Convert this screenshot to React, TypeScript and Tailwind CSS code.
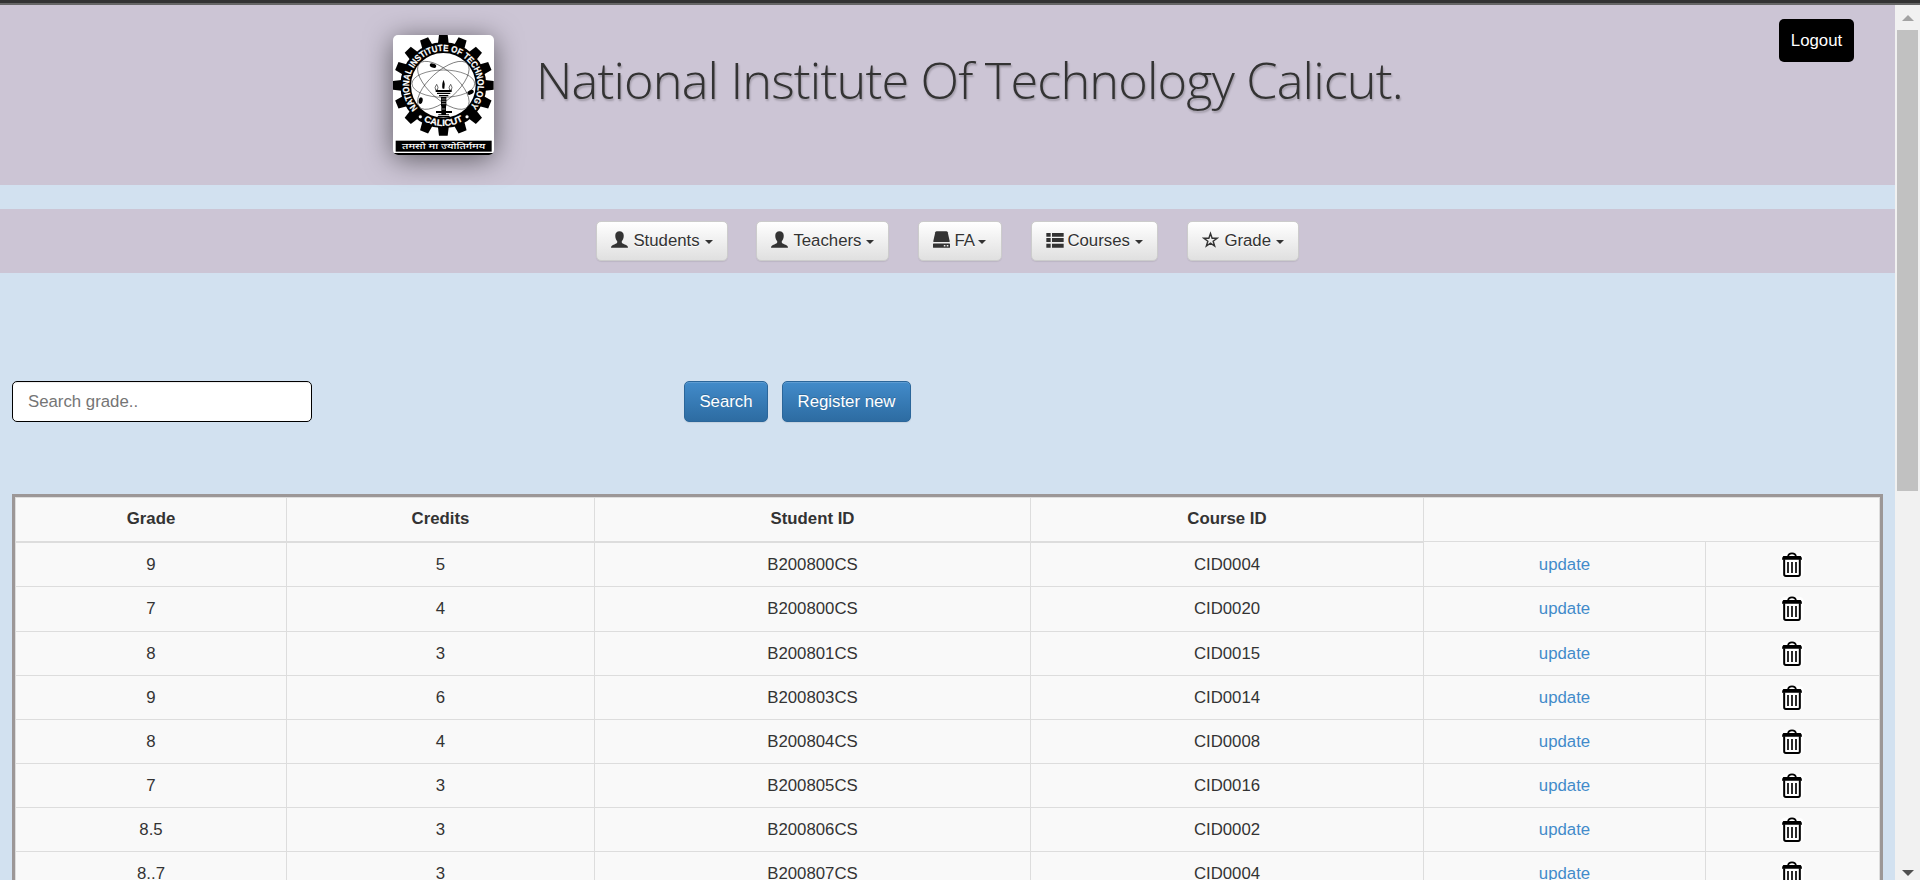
import React from "react";

const rows = [
  { grade: "9", credits: "5", student: "B200800CS", course: "CID0004", h: "h-[44px]" },
  { grade: "7", credits: "4", student: "B200800CS", course: "CID0020", h: "h-[45px]" },
  { grade: "8", credits: "3", student: "B200801CS", course: "CID0015", h: "h-[44px]" },
  { grade: "9", credits: "6", student: "B200803CS", course: "CID0014", h: "h-[44px]" },
  { grade: "8", credits: "4", student: "B200804CS", course: "CID0008", h: "h-[44px]" },
  { grade: "7", credits: "3", student: "B200805CS", course: "CID0016", h: "h-[44px]" },
  { grade: "8.5", credits: "3", student: "B200806CS", course: "CID0002", h: "h-[44px]" },
  { grade: "8..7", credits: "3", student: "B200807CS", course: "CID0004", h: "h-[44px]" },
];

function UserIcon() {
  return (
    <svg className="h-[17px] w-[17px]" viewBox="0 0 52 51" fill="currentColor">
      <path d="M26 0c8 0 13 5 13 14 0 8-3 13-6 17v4c1 3 5 4 9 6 6 2 10 4 10 10H0c0-6 4-8 10-10 4-2 8-3 9-6v-4c-3-4-6-9-6-17C13 5 18 0 26 0z" />
    </svg>
  );
}

function HddIcon() {
  return (
    <svg className="h-[17px] w-[17px]" viewBox="0 0 52 51" fill="currentColor">
      <path d="M11 0h30c2 0 3 1 4 3l6 27c0 2 0 3-2 3H3c-2 0-2-1-2-3L7 3c1-2 2-3 4-3z" />
      <path
        fillRule="evenodd"
        d="M2 38h48q2 0 2 2v9q0 2-2 2H2q-2 0-2-2v-9q0-2 2-2zM33 42v5h5v-5zM42 42v5h5v-5z"
      />
    </svg>
  );
}

function ListIcon() {
  return (
    <svg className="h-[17px] w-[18px]" viewBox="0 0 54 51" fill="currentColor">
      <path d="M1 6h13v11H1zM18 6h35v11H18zM1 21h13v12H1zM18 21h35v12H18zM1 38h13v12H1zM18 38h35v12H18z" />
    </svg>
  );
}

function StarIcon() {
  return (
    <svg className="h-[17px] w-[17px]" viewBox="0 0 48 48" fill="none" stroke="currentColor" strokeWidth="4">
      <path d="M24 7l4.600 13.500h14L31.500 29l4.200 13.500L24 34.500l-11.700 8L16.500 29 5.400 20.500h14z" />
    </svg>
  );
}

function NavButton({
  icon,
  label,
  className,
  labelClass = "mr-[5px] ml-[5px]",
}: {
  icon: React.ReactNode;
  label: string;
  className: string;
  labelClass?: string;
}) {
  return (
    <button
      className={
        "flex h-[40px] items-center rounded-[5px] border border-[#ccc] bg-linear-to-b from-white to-[#e0e0e0] pb-px pl-[14.4px] text-[#333] shadow-[0_1px_1px_rgba(0,0,0,0.08)] [text-shadow:0_1px_0_#fff] " +
        className
      }
    >
      <span className="mb-[3px]">{icon}</span>
      <span className={"leading-6 " + labelClass}>{label}</span>
      <span className="mt-[3px] border-x-[4px] border-t-[4px] border-x-transparent border-t-[#333]" />
    </button>
  );
}

function Crest() {
  const teeth = Array.from({ length: 16 }, (_, i) => i * 22.5);
  return (
    <svg
      className="h-[120px] w-[101px] rounded-[5px] bg-white shadow-[0_4px_28px_rgba(0,0,0,0.55)]"
      viewBox="0 0 303 360"
    >
      <defs>
        <path id="ringTop" d="M151 254a103 103 0 1 1 .1 0" />
        <path id="ringBottom" d="M29 151a122 122 0 0 0 244 0" />
      </defs>
      {teeth.map((a) => (
        <path key={a} d="M134 32L138 0H164L168 32z" transform={`rotate(${a} 151 151)`} />
      ))}
      <circle cx="151" cy="151" r="129" />
      <circle cx="151" cy="151" r="97" fill="#fff" />
      <g fill="none" stroke="#222" strokeWidth="1.600">
        <ellipse cx="151" cy="146" rx="94" ry="41" />
        <ellipse cx="151" cy="151" rx="97" ry="42" transform="rotate(42 151 151)" />
        <ellipse cx="151" cy="151" rx="97" ry="42" transform="rotate(-42 151 151)" />
      </g>
      <ellipse cx="120" cy="92" rx="10" ry="6" transform="rotate(20 120 92)" />
      <ellipse cx="233" cy="172" rx="10" ry="6" transform="rotate(-30 233 172)" />
      <ellipse cx="83" cy="197" rx="10" ry="6" transform="rotate(100 83 197)" />
      <path d="M152 134q6 14 2 27h-5q-4-13 3-27z" />
      <path d="M128 165h48v6h-48zM132 173h40v4h-40zM138 180h28v4h-28zM144 186h16v28h-16zM129 228h48v6h-48zM145 214h14v24h-14zM136 238h32v3h-32zM134 243h36v4h-36z" />
      <path d="M146 192h12M146 199h12M146 206h12M147 222h10" stroke="#fff" strokeWidth="1.500" />
      <path
        d="M131 148q7 9 2 17h-5q-5-8 3-17zM173 148q7 9 2 17h-5q-5-8 3-17z"
        fill="#fff"
        stroke="#222"
        strokeWidth="2"
      />
      <g
        fill="#fff"
        stroke="#fff"
        strokeWidth="0.600"
        fontFamily="'Liberation Sans', sans-serif"
        fontWeight="700"
        fontSize="27"
      >
        <text>
          <textPath href="#ringTop" startOffset="86" textLength="468" lengthAdjust="spacingAndGlyphs">
            NATIONAL INSTITUTE OF TECHNOLOGY
          </textPath>
        </text>
        <text>
          <textPath href="#ringBottom" startOffset="130" textLength="124" lengthAdjust="spacingAndGlyphs">
            CALICUT
          </textPath>
        </text>
        <circle cx="82" cy="245" r="4.500" />
        <circle cx="222" cy="245" r="4.500" />
      </g>
      <rect x="8" y="317" width="288" height="33" />
      <rect x="0" y="354" width="303" height="6" />
      <text
        x="152"
        y="341"
        fill="#fff"
        fontSize="23"
        fontWeight="500"
        textAnchor="middle"
        textLength="250"
        lengthAdjust="spacingAndGlyphs"
        fontFamily="'Noto Sans Devanagari', 'Noto Sans', sans-serif"
      >
        तमसो मा ज्योतिर्गमय
      </text>
    </svg>
  );
}

function TrashIcon() {
  return (
    <svg className="ml-[74px] block h-[26px] w-[24px]" viewBox="0 0 72 78">
      <rect x="1" y="2" width="70" height="74" rx="14" fill="#fff" />
      <path d="M24 14q1-10 12-10t12 10" fill="none" stroke="#000" strokeWidth="5" />
      <path d="M10 12h52q4 3 4 11H6q0-8 4-11z" />
      <path d="M12.500 22v45q0 5 5 5h37q5 0 5-5V22" fill="none" stroke="#000" strokeWidth="6" />
      <path d="M24 30v33M36 30v33M48 30v33" stroke="#000" strokeWidth="5" />
    </svg>
  );
}

const cell = "border-r border-b border-[#ddd] p-0 text-center align-middle";
const headCell = "border-r border-b-2 border-[#ddd] p-0 pb-px text-center align-middle font-bold";
const primary =
  "h-[41px] rounded-[5px] border border-[#2b669a] bg-linear-to-b from-[#428bca] to-[#2d6ca2] text-white shadow-[inset_0_1px_0_rgba(255,255,255,0.15),0_1px_1px_rgba(0,0,0,0.075)] [text-shadow:0_-1px_0_rgba(0,0,0,0.2)]";

export default function App() {
  return (
    <div className="flex h-[880px] w-[1920px] flex-col overflow-hidden bg-[#d2e1f0] font-['Liberation_Sans',Arial,sans-serif] text-[16.8px] leading-6 text-[#333]">
      <div className="h-[5px] shrink-0 border-b-2 border-[#666] bg-[#333]" />
      <div className="flex min-h-0 flex-1">
        <main className="w-[1895px] overflow-hidden">
          <header className="flex h-[180px] items-start bg-[#ccc5d5] pl-[393px]">
            <div className="mt-[30px] h-[120px] w-[101px]">
              <Crest />
            </div>
            <h1 className="mt-[40px] ml-[42px] w-[900px] font-['Open_Sans',sans-serif] text-[50.4px] leading-[70px] font-light tracking-[-0.82px] whitespace-nowrap [text-shadow:1px_2px_2px_rgba(0,0,0,0.22)]">
              National Institute Of Technology Calicut.
            </h1>
            <button className="mt-[14px] mr-[41px] ml-auto h-[43px] w-[75px] rounded-[5px] bg-black text-white">
              Logout
            </button>
          </header>
          <nav className="mt-6 flex h-16 items-start bg-[#ccc5d5] pt-3 pl-[596px]">
            <NavButton className="w-[132px]" icon={<UserIcon />} label="Students" />
            <NavButton className="ml-[28px] w-[133px]" icon={<UserIcon />} label="Teachers" />
            <NavButton
              className="ml-[29px] w-[84px]"
              labelClass="mr-[3px] ml-[4px]"
              icon={<HddIcon />}
              label="FA"
            />
            <NavButton
              className="ml-[29px] w-[127px]"
              labelClass="mr-[5px] ml-[3px]"
              icon={<ListIcon />}
              label="Courses"
            />
            <NavButton className="ml-[29px] w-[112px]" icon={<StarIcon />} label="Grade" />
          </nav>
          <div className="mt-[108px] flex pl-3">
            <input
              className="h-[41px] w-[300px] rounded-[5px] border border-black bg-white px-[15px] shadow-[inset_0_1px_1px_rgba(0,0,0,0.075)] placeholder:text-[#757575]"
              placeholder="Search grade.."
            />
            <button className={primary + " ml-[372px] w-[84px]"}>Search</button>
            <button className={primary + " ml-[14px] w-[129px]"}>Register new</button>
          </div>
          <div className="mt-[72px] ml-3 w-[1871px] border-[3px] border-[#9c9797]">
            <table className="w-[1865px] table-fixed border-separate border-spacing-0 border-t border-l border-[#ddd] bg-[#f9f9f9]">
              <colgroup>
                <col className="w-[271px]" />
                <col className="w-[308px]" />
                <col className="w-[436px]" />
                <col className="w-[393px]" />
                <col className="w-[282px]" />
                <col className="w-[174px]" />
              </colgroup>
              <thead>
                <tr className="h-[45px]">
                  <th className={headCell}>Grade</th>
                  <th className={headCell}>Credits</th>
                  <th className={headCell}>Student ID</th>
                  <th className={headCell}>Course ID</th>
                  <th colSpan={2} className="p-0">
                    <div className="h-[44px] border-r border-b border-[#ddd]" />
                    <div className="flex h-px">
                      <div className="w-[282px] border-r border-[#ddd]" />
                      <div className="flex-1 border-r border-[#ddd]" />
                    </div>
                  </th>
                </tr>
              </thead>
              <tbody>
                {rows.map((r) => (
                  <tr key={r.student + r.course} className={r.h}>
                    <td className={cell}>{r.grade}</td>
                    <td className={cell}>{r.credits}</td>
                    <td className={cell}>{r.student}</td>
                    <td className={cell}>{r.course}</td>
                    <td className={cell + " text-[#428bca]"}>update</td>
                    <td className={cell}>
                      <TrashIcon />
                    </td>
                  </tr>
                ))}
              </tbody>
            </table>
          </div>
        </main>
        <aside className="flex w-[25px] flex-col items-center bg-[#f1f1f1]">
          <div className="mt-[10px] h-0 border-x-[6px] border-b-[6px] border-x-transparent border-b-[#a3a3a3]" />
          <div className="mt-[9px] h-[461px] w-[21px] bg-[#c1c1c1]" />
          <div className="mt-auto mb-[4px] h-0 border-x-[6px] border-t-[6px] border-x-transparent border-t-[#505050]" />
        </aside>
      </div>
    </div>
  );
}
